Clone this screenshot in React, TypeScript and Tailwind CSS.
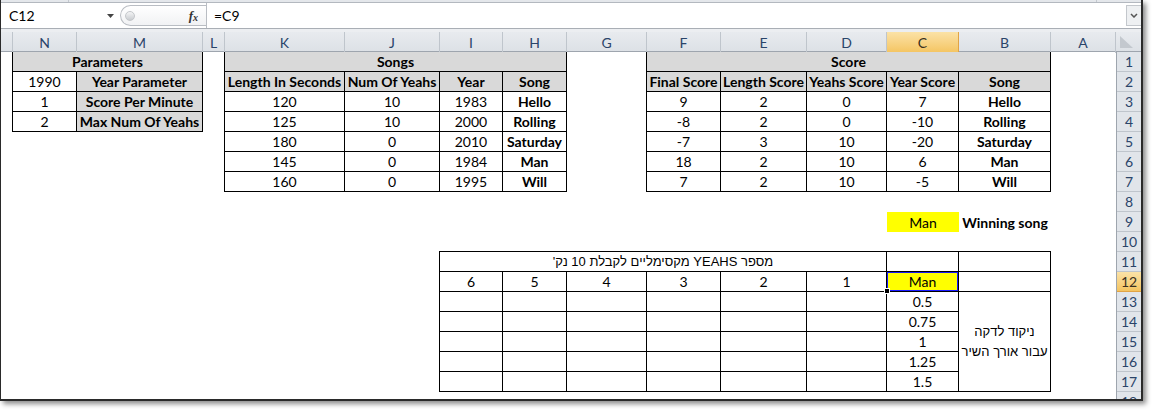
import React from 'react';

const SHEET_COLS =
  'grid grid-cols-[12px_64px_126px_22px_120px_95px_63px_64px_80px_74px_86px_80px_72px_92px_65px]';

const colLetters = ['', 'N', 'M', 'L', 'K', 'J', 'I', 'H', 'G', 'F', 'E', 'D', 'C', 'B', 'A'];

const songs: [number, number, number, string][] = [
  [120, 10, 1983, 'Hello'],
  [125, 10, 2000, 'Rolling'],
  [180, 0, 2010, 'Saturday'],
  [145, 0, 1984, 'Man'],
  [160, 0, 1995, 'Will'],
];

const scores: [number, number, number, number, string][] = [
  [9, 2, 0, 7, 'Hello'],
  [-8, 2, 0, -10, 'Rolling'],
  [-7, 3, 10, -20, 'Saturday'],
  [18, 2, 10, 6, 'Man'],
  [7, 2, 10, -5, 'Will'],
];

const perMinute = ['0.5', '0.75', '1', '1.25', '1.5'];

function Cell({ children, className = '' }: { children?: React.ReactNode; className?: string }) {
  return (
    <div className={`flex items-center justify-center border-b border-r border-black whitespace-nowrap ${className}`}>
      {children}
    </div>
  );
}

export default function App() {
  return (
    <div className="w-[1152px] h-[410px] bg-white font-['Lato','Liberation_Sans',sans-serif] text-[14px] text-black">
      <div className="w-[1143px] h-[401px] flex flex-col overflow-hidden border-l border-r-2 border-b-2 border-[#2a2a2a] shadow-[3px_3px_5px_rgba(0,0,0,0.45)]">
        {/* ribbon remnant */}
        <div className="h-[3px] flex bg-[#e4e7eb] border-b border-[#b3b8bf]">
          <div className="w-[68px] border-r border-[#c3c8ce]" />
          <div className="flex-1 border-r border-[#c3c8ce] mr-[44px]" />
        </div>

        {/* formula bar */}
        <div className="h-[26px] flex items-stretch bg-white border-b border-[#a9aeb5]">
          <div className="w-[119px] flex items-center justify-between pl-[8px] pr-[6px]">
            <span>C12</span>
            <svg width="7" height="4" viewBox="0 0 7 4">
              <polygon points="0,0 7,0 3.5,4" fill="#444" />
            </svg>
          </div>
          <div className="w-[86px] my-[2px] flex items-center justify-between rounded-l-[12px] border border-r-0 border-[#b9bdc3] bg-gradient-to-b from-white to-[#f1f2f4] pl-[4px] pr-[8px]">
            <div className="w-[10px] h-[10px] rounded-full bg-gradient-to-b from-[#f4f5f6] to-[#c9ccd0] border border-[#c4c7cb]" />
            <span className="font-['Liberation_Serif',serif] italic font-bold text-[13px] text-[#333]">
              f<span className="text-[10px] align-[-1px]">x</span>
            </span>
          </div>
          <div className="w-px bg-[#b9bdc3]" />
          <div className="flex-1 flex items-center pl-[7px]">=C9</div>
          <div className="w-[15px] my-[2px] flex items-center justify-center border-l border-y border-[#c3c7cc] bg-[#eef0f2]">
            <svg width="8" height="5" viewBox="0 0 8 5">
              <polyline points="1,1 4,4 7,1" fill="none" stroke="#555" strokeWidth="1.5" />
            </svg>
          </div>
        </div>

        <div className="h-[3px] bg-[#eceef1]" />

        {/* column headers */}
        <div className="h-5 flex border-b border-[#9ea5ae] bg-gradient-to-b from-[#e8ebef] to-[#dde1e6] text-[#2a4469]">
          <div className={SHEET_COLS}>
            {colLetters.map((l, i) => (
              <div
                key={i}
                className={`flex items-center justify-center border-r ${
                  i === 12
                    ? 'bg-gradient-to-b from-[#fbe2a6] to-[#f4c45f] border-[#e1a445] text-[#3a3020]'
                    : 'border-[#bfc5cc]'
                }`}
              >
                {l}
              </div>
            ))}
          </div>
          <div className="w-[25px] flex items-end justify-start pl-[4px] pb-[3px]">
            <svg width="13" height="12" viewBox="0 0 13 12">
              <polygon points="0,0 0,12 13,12" fill="#c3c8ce" />
            </svg>
          </div>
        </div>

        {/* sheet body */}
        <div className="flex-1 flex overflow-hidden">
          <div className={`${SHEET_COLS} grid-rows-[repeat(18,20px)] h-full overflow-hidden`}>
            {/* Parameters */}
            <div className="col-start-2 col-span-2 row-start-1 row-span-4 -ml-px -mt-px grid grid-cols-[64px_126px] grid-rows-[repeat(4,20px)] border-l border-t border-black">
              <Cell className="col-span-2 bg-[#d9d9d9] font-bold">Parameters</Cell>
              <Cell>1990</Cell>
              <Cell className="bg-[#d9d9d9] font-bold">Year Parameter</Cell>
              <Cell>1</Cell>
              <Cell className="bg-[#d9d9d9] font-bold">Score Per Minute</Cell>
              <Cell>2</Cell>
              <Cell className="bg-[#d9d9d9] font-bold">Max Num Of Yeahs</Cell>
            </div>

            {/* Songs */}
            <div className="col-start-5 col-span-4 row-start-1 row-span-7 -ml-px -mt-px grid grid-cols-[120px_95px_63px_64px] grid-rows-[repeat(7,20px)] border-l border-t border-black">
              <Cell className="col-span-4 bg-[#d9d9d9] font-bold">Songs</Cell>
              <Cell className="bg-[#d9d9d9] font-bold">Length In Seconds</Cell>
              <Cell className="bg-[#d9d9d9] font-bold">Num Of Yeahs</Cell>
              <Cell className="bg-[#d9d9d9] font-bold">Year</Cell>
              <Cell className="bg-[#d9d9d9] font-bold">Song</Cell>
              {songs.map(([len, yeahs, year, name]) => (
                <React.Fragment key={name}>
                  <Cell>{len}</Cell>
                  <Cell>{yeahs}</Cell>
                  <Cell>{year}</Cell>
                  <Cell className="font-bold">{name}</Cell>
                </React.Fragment>
              ))}
            </div>

            {/* Score */}
            <div className="col-start-10 col-span-5 row-start-1 row-span-7 -ml-px -mt-px grid grid-cols-[74px_86px_80px_72px_92px] grid-rows-[repeat(7,20px)] border-l border-t border-black">
              <Cell className="col-span-5 bg-[#d9d9d9] font-bold">Score</Cell>
              <Cell className="bg-[#d9d9d9] font-bold">Final Score</Cell>
              <Cell className="bg-[#d9d9d9] font-bold">Length Score</Cell>
              <Cell className="bg-[#d9d9d9] font-bold">Yeahs Score</Cell>
              <Cell className="bg-[#d9d9d9] font-bold">Year Score</Cell>
              <Cell className="bg-[#d9d9d9] font-bold">Song</Cell>
              {scores.map(([fin, len, yeahs, year, name]) => (
                <React.Fragment key={name}>
                  <Cell>{fin}</Cell>
                  <Cell>{len}</Cell>
                  <Cell>{yeahs}</Cell>
                  <Cell>{year}</Cell>
                  <Cell className="font-bold">{name}</Cell>
                </React.Fragment>
              ))}
            </div>

            {/* winning song */}
            <div className="col-start-13 row-start-9 flex items-center justify-center bg-[#ffff00]">Man</div>
            <div className="col-start-14 row-start-9 flex items-center justify-center font-bold whitespace-nowrap">
              Winning song
            </div>

            {/* yeahs x per-minute table */}
            <div className="col-start-7 col-span-8 row-start-11 row-span-7 -ml-px -mt-px grid grid-cols-[63px_64px_80px_74px_86px_80px_72px_92px] grid-rows-[repeat(7,20px)] border-l border-t border-black">
              <Cell className="col-span-6">
                <span dir="rtl" className="font-['Liberation_Sans',sans-serif] text-[13px]">
                  מספר YEAHS מקסימליים לקבלת 10 נק'
                </span>
              </Cell>
              <Cell />
              <Cell />
              {[6, 5, 4, 3, 2, 1].map((n) => (
                <Cell key={n}>{n}</Cell>
              ))}
              <Cell className="relative bg-[#ffff00]">
                <div className="absolute inset-0 border border-[#1a1aff]" />
                <span className="relative">Man</span>
                <div className="absolute -left-[3px] -bottom-[3px] w-[6px] h-[6px] bg-black border border-white z-10" />
              </Cell>
              <Cell />
              {perMinute.map((v, r) => (
                <React.Fragment key={v}>
                  <Cell />
                  <Cell />
                  <Cell />
                  <Cell />
                  <Cell />
                  <Cell />
                  <Cell>{v}</Cell>
                  {r === 0 && (
                    <Cell className="row-span-5 flex-col leading-[20px] text-[13px] font-['Liberation_Sans',sans-serif]">
                      <span dir="rtl">ניקוד לדקה</span>
                      <span dir="rtl">עבור אורך השיר</span>
                    </Cell>
                  )}
                </React.Fragment>
              ))}
            </div>
          </div>

          {/* row headers */}
          <div className="w-[25px] flex flex-col border-l border-[#9ea5ae] bg-[#e1e5ea] text-[#2a4469]">
            {Array.from({ length: 18 }, (_, i) => i + 1).map((n) => (
              <div
                key={n}
                className={`h-5 shrink-0 flex items-center justify-center border-b ${
                  n === 12
                    ? 'bg-gradient-to-b from-[#fbe2a6] to-[#f4c45f] border-[#e1a445] text-[#3a3020]'
                    : 'border-[#bfc5cc]'
                }`}
              >
                {n}
              </div>
            ))}
          </div>
        </div>
      </div>
    </div>
  );
}
